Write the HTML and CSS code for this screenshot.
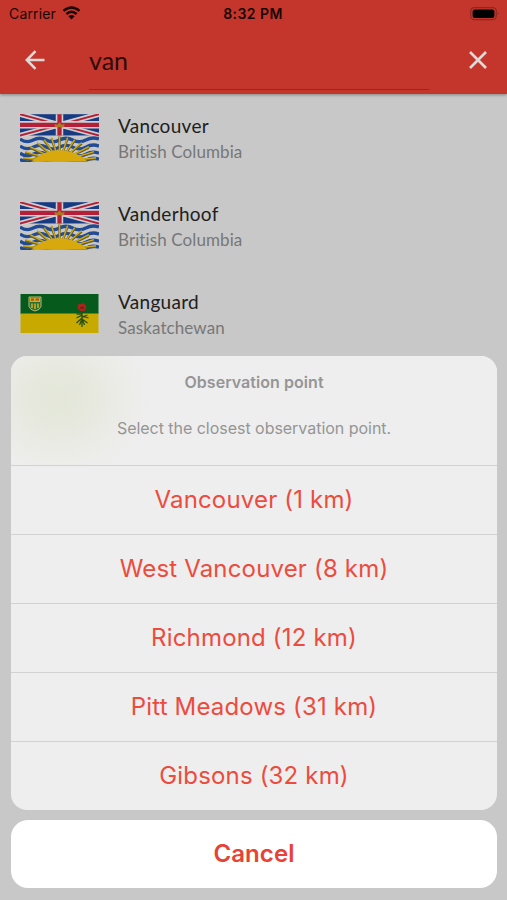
FILE: index.html
```html
<!DOCTYPE html>
<html lang="en">
<head>
<meta charset="utf-8">
<title>Location search</title>
<link rel="stylesheet" href="styles.css">
</head>
<body>
<svg class="defs" aria-hidden="true">
  <symbol id="flag-bc" viewBox="0 0 78 47">
    <rect width="78" height="47" fill="#c8c8c8"/>
    <rect width="78" height="21" fill="#173b83"/>
    <path d="M0 0 78 21M78 0 0 21" stroke="#cfcfcf" stroke-width="5.4"/>
    <path d="M0 0 39 10.5M78 0 39 10.5M0 21 39 10.5M78 21 39 10.5" stroke="#b52038" stroke-width="1.9"/>
    <path d="M39 0V21M0 10.5H78" stroke="#cfcfcf" stroke-width="7.4"/>
    <path d="M39 0V21M0 10.5H78" stroke="#b52038" stroke-width="4.2"/>
    <path d="M34.5 13 34 9.8 36.7 10.5 39 8 41.3 10.5 44 9.8 43.5 13Z" fill="#ad7a24"/>
    <path id="wave" d="M0 24.5Q6.5 29 13 25.5T26 25.5T39 25.5T52 25.5T65 25.5T78 24.5" fill="none" stroke="#214b94" stroke-width="3.3"/>
    <use href="#wave" y="7"/><use href="#wave" y="14"/><use href="#wave" y="20"/>
    <path d="M39 47 3 44M39 47 5 38M39 47 10 33M39 47 17 29M39 47 24 26M39 47 31 24M39 47 39 22M39 47 47 24M39 47 54 26M39 47 61 29M39 47 68 33M39 47 73 38M39 47 75 44" stroke="#6c611f" stroke-width="2.3"/>
    <path d="M39 47 3 43M39 47 5 37M39 47 10 32M39 47 17 28M39 47 24 25M39 47 31 23M39 47 39 21.5M39 47 47 23M39 47 54 25M39 47 61 28M39 47 68 32M39 47 73 37M39 47 75 43" stroke="#cda821" stroke-width="1.3"/>
    <path d="M11 47Q22 35.5 39 35.5T67 47Z" fill="#d7a90c"/>
  </symbol>
  <symbol id="flag-sk" viewBox="0 0 78 39">
    <rect width="78" height="20" fill="#055a1c"/>
    <rect y="19.5" width="78" height="19.5" fill="#c8a900"/>
    <path d="M8.5 3H20.5V12.5Q19.5 16 14.5 17Q9.5 16 8.5 12.5Z" fill="#28702e" stroke="#c2b579" stroke-width="1"/>
    <path d="M9.5 4H19.5V8H9.5Z" fill="#c7b224"/>
    <path d="M10.5 5.7H13.5M15 5.5H18.5" stroke="#b94a20" stroke-width="2.2"/>
    <path d="M11.5 9.5V14M14.5 9.5V15M17.5 9.5V14" stroke="#baa72a" stroke-width="1.8"/>
    <path d="M61.5 17V33M61.5 21 56 24M61.5 23 67 21M61.5 24 56 29M61.5 25 67 29M61.5 20 56 20M61.5 22 68 24M61.5 25 59 31M61.5 25 64 31" fill="none" stroke="#24501b" stroke-width="1.3"/>
    <path d="M57 14 58 10 61 10 63 9 65 11 66 14 64 17 60 17Z" fill="#a8251c"/>
    <path d="M59.8 13.8H63.5" stroke="#6a2219" stroke-width="1.8"/>
  </symbol>
</svg>

<div class="screen">
  <header class="header">
    <div class="status">
      <div class="carrier">
        <span>Carrier</span>
        <svg class="wifi" viewBox="0 0 18 14"><path d="M1 4.9Q9-1.9 17 4.9M3.9 8Q9 3.6 14.1 8" fill="none" stroke="#170503" stroke-width="2.5"/><path d="M5.9 10.2Q9 7.6 12.1 10.2L9 13.4Z" fill="#170503"/></svg>
      </div>
      <time class="clock">8:32 PM</time>
      <svg class="battery" viewBox="0 0 30 14"><rect x=".7" y=".7" width="25.6" height="12" rx="3.6" fill="none" stroke="#8d271f" stroke-width="1.2"/><rect x="2.6" y="2.5" width="21.8" height="8.4" rx="2" fill="#000"/><path d="M27.7 4.8Q29.4 6.7 27.7 8.6Z" fill="#8d271f"/></svg>
    </div>
    <div class="search">
      <svg class="back" viewBox="0 0 20 20"><path d="M19.5 10H2M10.5 1.2 1.8 10 10.5 18.8" fill="none" stroke="#dedad9" stroke-width="2.5"/></svg>
      <div class="field">van</div>
      <svg class="clear" viewBox="0 0 18 18"><path d="M1 1 17 17M17 1 1 17" fill="none" stroke="#dedad9" stroke-width="2.6"/></svg>
    </div>
  </header>

  <main class="results">
    <div class="row"><svg class="flag"><use href="#flag-bc"/></svg><div><div class="city">Vancouver</div><div class="province">British Columbia</div></div></div>
    <div class="row"><svg class="flag"><use href="#flag-bc"/></svg><div><div class="city">Vanderhoof</div><div class="province">British Columbia</div></div></div>
    <div class="row"><svg class="flag flag-wide"><use href="#flag-sk"/></svg><div><div class="city">Vanguard</div><div class="province">Saskatchewan</div></div></div>
  </main>

  <section class="sheet">
    <div class="panel">
      <div class="intro">
        <h1 class="title">Observation point</h1>
        <p class="message">Select the closest observation point.</p>
      </div>
      <div class="option">Vancouver (1 km)</div>
      <div class="option">West Vancouver (8 km)</div>
      <div class="option">Richmond (12 km)</div>
      <div class="option">Pitt Meadows (31 km)</div>
      <div class="option">Gibsons (32 km)</div>
    </div>
    <div class="cancel">Cancel</div>
  </section>
</div>
</body>
</html>
```
FILE: styles.css
```css
* { box-sizing: border-box; }
body { margin: 0; font-family: Inter, "Liberation Sans", sans-serif; }
.defs { position: absolute; width: 0; height: 0; }
.screen { position: relative; height: 900px; overflow: hidden; background: #c8c8c8; }

.header { height: 94px; background: #c4362c; box-shadow: 0 1px 3px rgba(0, 0, 0, .35); }
.status { display: grid; grid-template-columns: 1fr auto 1fr; align-items: center; height: 27px; padding: 0 7px 0 9px; color: #170503; }
.carrier { display: flex; align-items: center; gap: 6px; font-size: 14px; letter-spacing: .15px; }
.wifi { width: 19px; height: 14px; margin-top: -1px; }
.clock { margin: 0 3px 0 0; font-size: 14px; font-weight: 600; letter-spacing: .45px; }
.battery { width: 30px; height: 14px; justify-self: end; }
.search { display: flex; align-items: center; height: 63px; padding: 0 20px 0 25px; }
.back { width: 20px; height: 20px; margin-top: 2px; }
.field { width: 340px; height: 63px; margin-left: 44px; border-bottom: 1.5px solid #96271f; font: 25px/67px Lato, sans-serif; color: #2d0907; }
.clear { width: 18px; height: 18px; margin: 2px 0 0 auto; }

.results { font-family: Lato, sans-serif; font-variant-ligatures: none; }
.row { display: flex; align-items: center; gap: 19px; height: 88px; padding-left: 20px; }
.flag { width: 79px; height: 48px; }
.flag-wide { height: 39px; margin-top: -1px; }
.city { font-size: 19px; line-height: 25px; letter-spacing: .3px; color: #202020; }
.province { padding-top: 1px; font-size: 17px; line-height: 25px; letter-spacing: .1px; color: #777; }

.sheet { position: absolute; top: 356px; right: 10px; left: 11px; display: flex; flex-direction: column; gap: 10px; text-align: center; }
.panel { overflow: hidden; border-radius: 16px; background: #eee; }
.intro { height: 109px; padding-top: 15px; background: radial-gradient(ellipse 92px 80px at 48px 43px, #e3e6d9 0%, #e6e8dd 30%, #eaebe5 60%, #ededeb 85%, #eee 100%); color: #959595; }
.title { margin: 0; font-size: 16px; font-weight: 600; line-height: 22px; letter-spacing: .05px; }
.message { margin: 24px 0 0; font-size: 16px; line-height: 22px; letter-spacing: -.03px; }
.option { height: 69px; border-top: 1px solid #d2d2d2; font-size: 24px; line-height: 68px; letter-spacing: .17px; color: #ec4b3e; }
.cancel { height: 68px; border-radius: 17px; background: #fff; font-size: 24px; font-weight: 600; line-height: 68px; letter-spacing: .1px; color: #e94235; }
```
